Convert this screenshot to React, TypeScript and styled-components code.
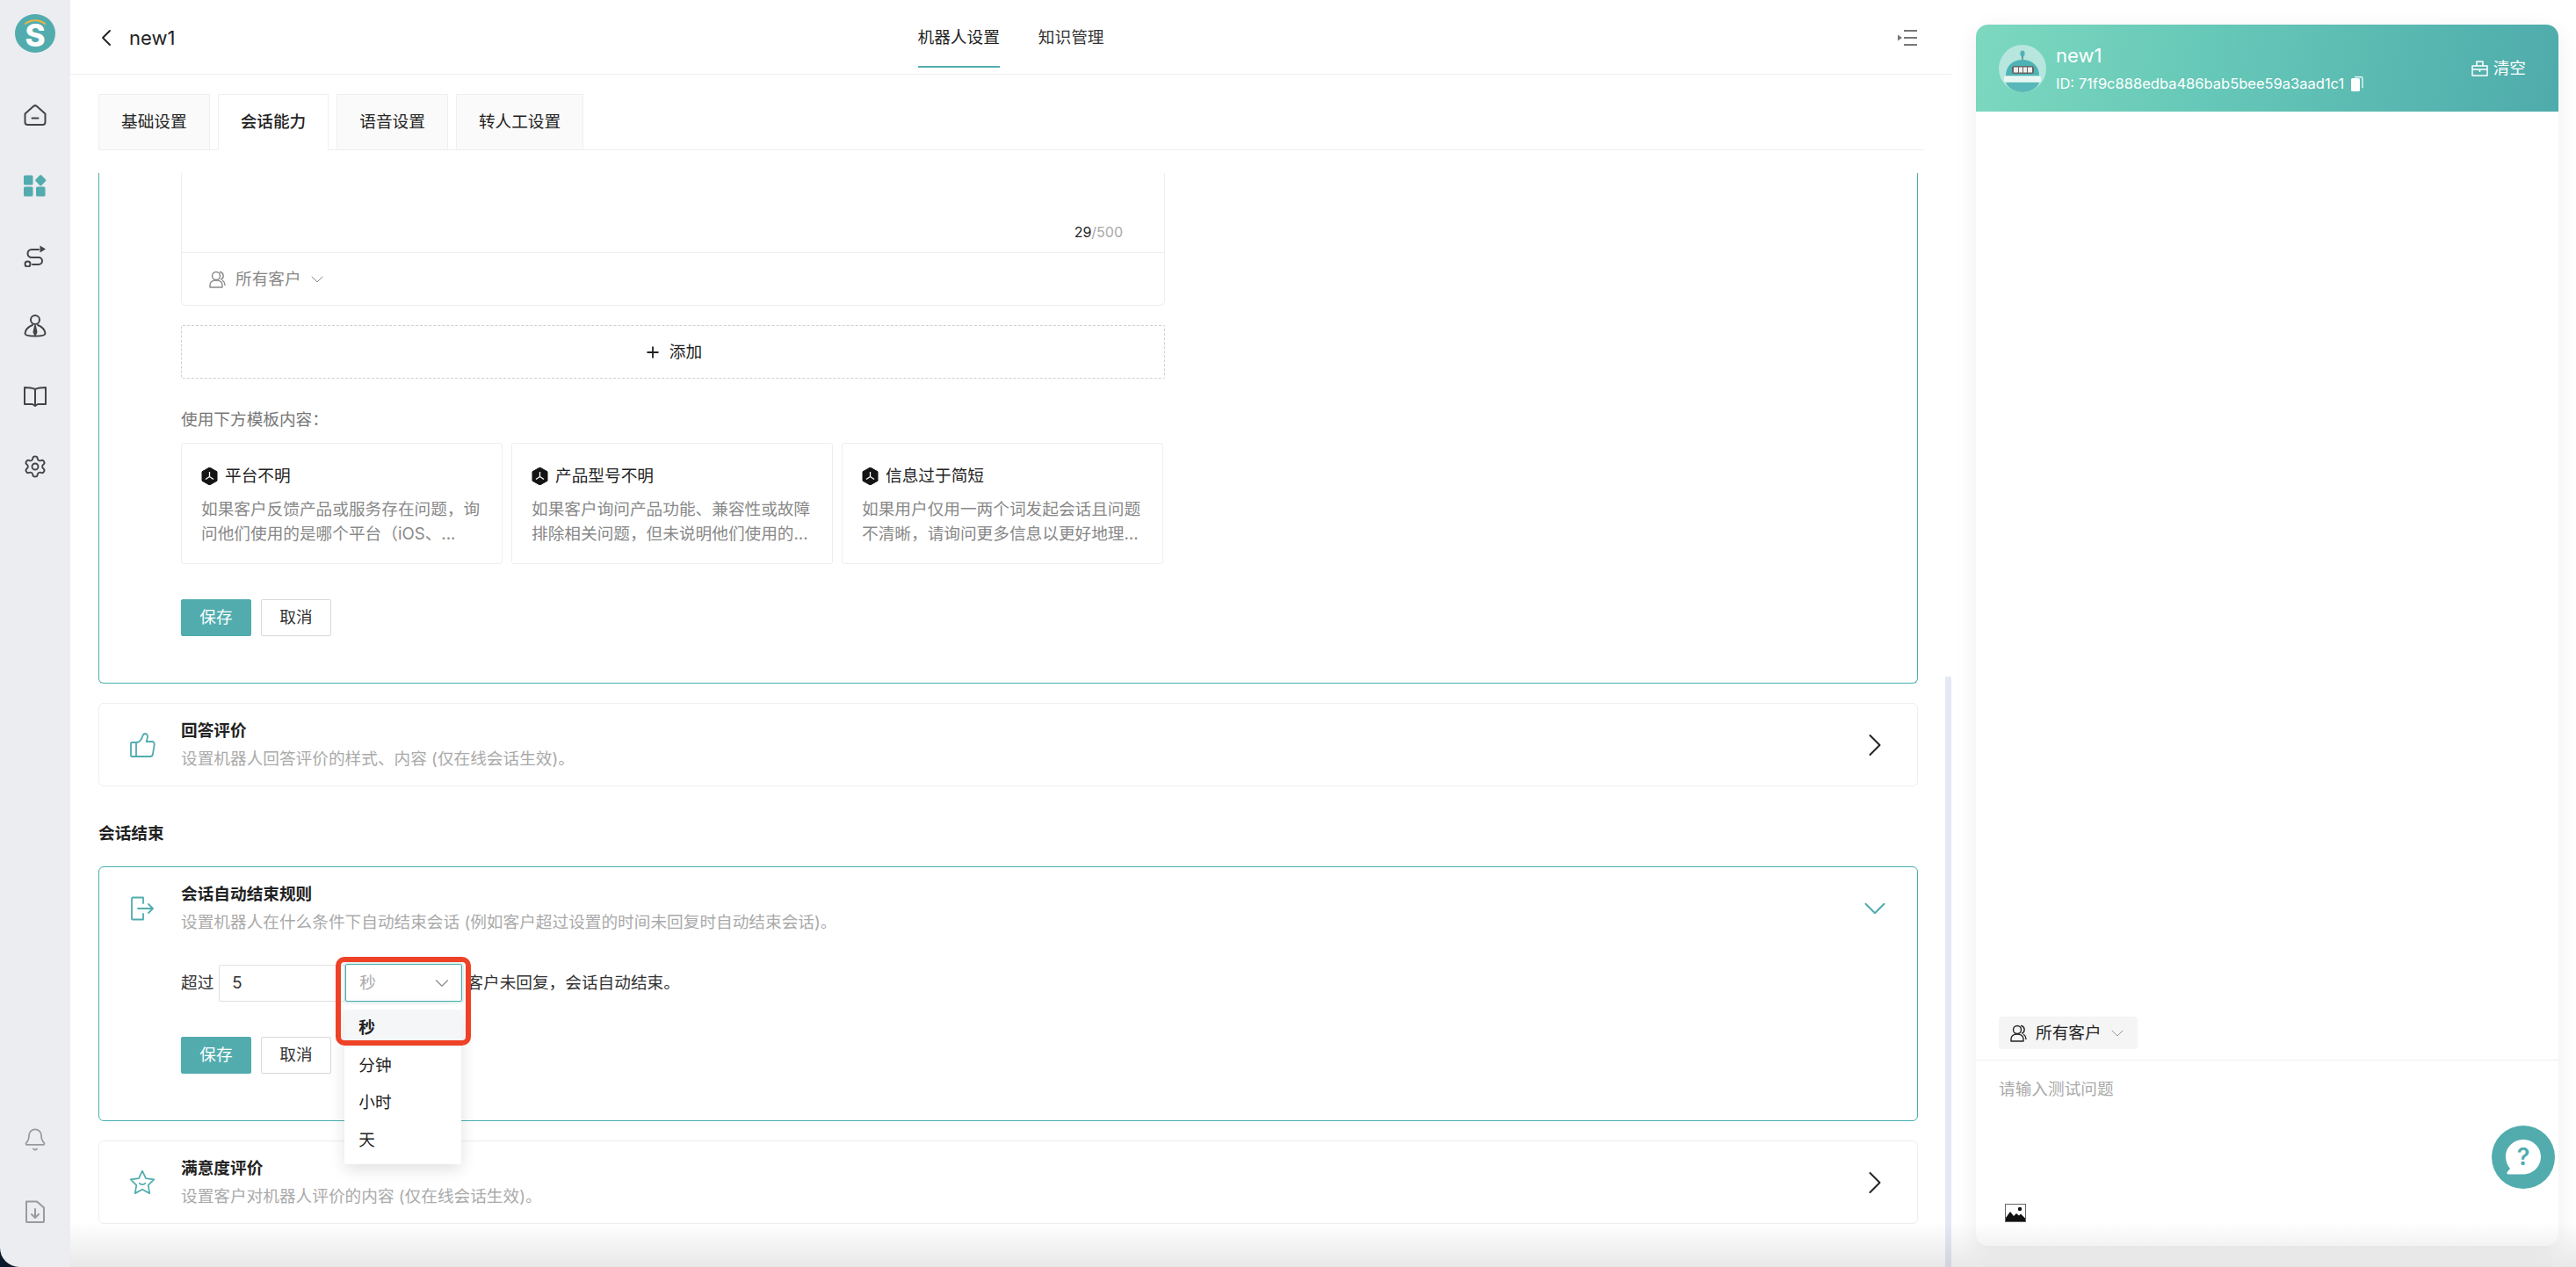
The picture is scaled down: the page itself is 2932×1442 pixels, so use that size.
import React from "react";
import styled, { createGlobalStyle } from "styled-components";
import { Bell, ChevronDown, ChevronLeft, ChevronRight, Plus, Settings } from "lucide-react";

const TEAL = "#52acae";
const FONT = `"Inter", "Noto Sans CJK SC", "Noto Sans", sans-serif`;

const GlobalStyle = createGlobalStyle`
  html, body {
    margin: 0;
    padding: 0;
    width: 2932px;
    height: 1442px;
    overflow: hidden;
    background: #0b1a2a;
  }
  * { box-sizing: border-box; }
`;

const Page = styled.div`
  position: relative;
  display: flex;
  width: 2932px;
  height: 1442px;
  overflow: hidden;
  font-family: ${FONT};
  font-size: 18.67px;
  line-height: 28px;
  color: #222;
  background: #0b1a2a;
`;

const Sidebar = styled.nav`
  width: 80px;
  flex: none;
  display: flex;
  flex-direction: column;
  align-items: center;
  padding: 16px 0 50px;
  background: #ebedf1;
  border-bottom-left-radius: 22px;
`;

const Logo = styled.div`
  width: 46px;
  height: 44px;
  margin-bottom: 31px;
`;

const NavItem = styled.div`
  width: 80px;
  height: 80px;
  display: flex;
  align-items: center;
  justify-content: center;
  color: ${p => (p.$active ? TEAL : "#444")};
`;

const SideBottom = styled.div`
  margin-top: auto;
  display: flex;
  flex-direction: column;
  align-items: center;
  gap: 55px;
  color: #9a9a9a;
`;

const Main = styled.main`
  position: relative;
  width: 2141px;
  flex: none;
  display: flex;
  flex-direction: column;
  background: #fff;
`;

const TopBar = styled.header`
  height: 85px;
  flex: none;
  display: grid;
  grid-template-columns: 1fr auto 1fr;
  align-items: center;
  padding: 0 39px;
  border-bottom: 1px solid #eeeeee;
`;

const BackGroup = styled.div`
  display: flex;
  align-items: center;
  gap: 10px;
  margin-left: -14px;
  font-size: 22px;
  color: #222;
`;

const TopNav = styled.div`
  display: flex;
  gap: 44px;
  height: 85px;
`;

const TopNavItem = styled.div`
  height: 77px;
  padding-top: 29px;
  color: ${p => (p.$active ? "#222" : "#333")};
  border-bottom: ${p => (p.$active ? `2px solid ${TEAL}` : "none")};
  white-space: nowrap;
`;

const CollapseBtn = styled.div`
  justify-self: end;
  display: flex;
  color: #777;
`;

const Body = styled.div`
  flex: 1;
  min-height: 0;
  display: flex;
  flex-direction: column;
  padding: 22px 31px 0 32px;
`;

const TabBar = styled.div`
  display: flex;
  gap: 9px;
  height: 64px;
  flex: none;
  border-bottom: 1px solid #eeeeee;
`;

const Tab = styled.div`
  height: 64px;
  padding: 17px 25px 0;
  border: 1px solid #efefef;
  border-bottom: ${p => (p.$active ? "1px solid #fff" : "1px solid #efefef")};
  background: ${p => (p.$active ? "#fff" : "#fafafa")};
  font-weight: ${p => (p.$active ? 500 : 400)};
  color: #222;
  white-space: nowrap;
`;

const Scroller = styled.div`
  margin-top: 26px;
  padding-right: 7px;
  flex: 1;
  min-height: 0;
  overflow: hidden;
`;

/* $clipped: the card that is scrolled past its top edge */
const OpenCard = styled.section`
  border: 1px solid #48b0ae;
  border-top: ${p => (p.$clipped ? "none" : "1px solid #48b0ae")};
  border-radius: ${p => (p.$clipped ? "0 0 6px 6px" : "6px")};
  background: #fff;
  padding: ${p => (p.$clipped ? "0 24px 53px 93px" : "17px 24px 53px 33px")};
  margin-top: ${p => (p.$clipped ? "0" : "23px")};
  height: ${p => (p.$clipped ? "581px" : "290px")};
`;

const TextBox = styled.div`
  width: 1120px;
  height: 151px;
  border: 1px solid #eeeeee;
  border-top: none;
  border-radius: 0 0 6px 6px;
  display: flex;
  flex-direction: column;
`;

const TextInput = styled.div`
  height: 91px;
  display: flex;
  justify-content: flex-end;
  align-items: flex-end;
  padding: 0 47px 12px 0;
  border-bottom: 1px solid #eeeeee;
  font-size: 16px;
  line-height: 22px;
  color: #a8a8a8;
  b {
    font-weight: 400;
    color: #222;
  }
`;

const AudienceRow = styled.div`
  flex: 1;
  display: flex;
  align-items: center;
  padding-left: 31px;
  gap: 6px;
  color: #888;
`;

const AudienceIcon = styled.span`
  display: flex;
  margin-right: ${p => (p.$dark ? "4px" : "5px")};
  color: ${p => (p.$dark ? "#222" : "#888")};
`;

const AddButton = styled.div`
  width: 1120px;
  height: 61px;
  margin-top: 22px;
  display: flex;
  align-items: center;
  justify-content: center;
  gap: 9px;
  border: 1px dashed #d0d0d0;
  border-radius: 2px;
  color: #222;
`;

const TemplateLabel = styled.div`
  margin-top: 33px;
  color: #777;
`;

const TemplateGrid = styled.div`
  margin-top: 12px;
  width: 1120px;
  display: grid;
  grid-template-columns: repeat(3, 366px);
  gap: 10px;
`;

const TemplateCard = styled.div`
  height: 138px;
  padding: 23px 10px 0 22px;
  border: 1px solid #eeeeee;
  border-radius: 3px;
`;

const TemplateTitle = styled.div`
  display: flex;
  align-items: center;
  gap: 8px;
  color: #222;
`;

const TemplateDesc = styled.div`
  margin-top: 10px;
  color: #888;
`;

const Actions = styled.div`
  margin: 40px 0 0 ${p => (p.$indent ? "60px" : "0")};
  display: flex;
  gap: 11px;
`;

const Btn = styled.div`
  width: 80px;
  height: 42px;
  display: flex;
  align-items: center;
  justify-content: center;
  border-radius: 2px;
  border: 1px solid ${p => (p.$primary ? TEAL : "#d9d9d9")};
  background: ${p => (p.$primary ? TEAL : "#fff")};
  color: ${p => (p.$primary ? "#fff" : "#333")};
`;

const RowCard = styled.section`
  height: 95px;
  margin-top: 22px;
  border: 1px solid #eeeeee;
  border-radius: 6px;
  padding-top: 17px;
`;

const RowHead = styled.div`
  display: grid;
  grid-template-columns: 32px 1fr 24px;
  column-gap: 28px;
  align-items: center;
  padding: ${p => (p.$flush ? "0 12px 0 0" : "0 36px 0 33px")};
`;

const RowIcon = styled.div`
  display: flex;
  justify-content: center;
  color: ${TEAL};
`;

const RowTitle = styled.div`
  font-weight: 700;
  color: #222;
`;

const RowDesc = styled.div`
  margin-top: 4px;
  color: #aaa;
`;

const RowArrow = styled.div`
  display: flex;
  justify-content: center;
  color: ${p => (p.$open ? TEAL : "#222")};
  svg {
    flex: none;
  }
`;

const SectionTitle = styled.h3`
  margin: 40px 0 0;
  font-size: 18.67px;
  line-height: 28px;
  font-weight: 700;
  color: #222;
`;

const FormRow = styled.div`
  margin: 33px 0 0 60px;
  display: flex;
  align-items: center;
  height: 43px;
  color: #333;
`;

const NumberInput = styled.div`
  width: 144px;
  height: 42px;
  margin-left: 6px;
  padding-left: 14px;
  line-height: 40px;
  border: 1px solid #dfdfdf;
  border-radius: 2px;
  color: #333;
`;

const SelectWrap = styled.div`
  position: relative;
  width: 133px;
  height: 43px;
  margin-right: 5px;
`;

const SelectBox = styled.div`
  height: 43px;
  display: flex;
  align-items: center;
  justify-content: space-between;
  padding: 0 9px 0 15px;
  border: 1px solid #48b0ae;
  border-radius: 2px;
  box-shadow: 0 0 0 2px rgba(82, 172, 174, 0.15);
  background: #fff;
  color: #aaa;
`;

const Dropdown = styled.div`
  position: absolute;
  top: 47px;
  left: -1px;
  width: 133px;
  height: 181px;
  padding: 5px 0;
  background: #fff;
  border-radius: 3px;
  box-shadow: 0 6px 18px rgba(0, 0, 0, 0.12);
  z-index: 5;
`;

const Option = styled.div`
  height: 42.67px;
  line-height: 42.67px;
  padding-left: 16px;
  color: #222;
  font-weight: ${p => (p.$selected ? 700 : 400)};
  background: ${p => (p.$selected ? "#f5f6f8" : "#fff")};
`;

/* annotation box the screenshot has on top of the select */
const Highlight = styled.div`
  position: absolute;
  top: -8px;
  left: -11px;
  width: 154px;
  height: 101px;
  border: 6px solid #ee4227;
  border-radius: 10px;
  z-index: 6;
  pointer-events: none;
`;

const Thumb = styled.div`
  position: absolute;
  right: 0;
  top: 770px;
  bottom: 0;
  width: 7px;
  background: #e5e9f5;
`;

const SidePanel = styled.aside`
  flex: 1;
  min-width: 0;
  padding: 28px 20px 24px 28px;
  background: #fff;
`;

const ChatCard = styled.div`
  height: 100%;
  display: flex;
  flex-direction: column;
  background: #fff;
  border-radius: 14px;
  box-shadow: 0 6px 26px rgba(0, 0, 0, 0.07);
`;

const ChatHead = styled.div`
  height: 99px;
  flex: none;
  display: flex;
  align-items: center;
  padding: 0 37px 0 26px;
  gap: 11px;
  color: #fff;
  border-radius: 14px 14px 0 0;
  background: linear-gradient(100deg, #7dd8bf 0%, #66c8b8 40%, #4eabab 100%);
`;

const AvatarBox = styled.div`
  width: 54px;
  height: 54px;
  flex: none;
`;

const ChatInfo = styled.div`
  padding-top: 3px;
`;

const ChatName = styled.div`
  font-size: 22px;
  line-height: 28px;
`;

const ChatId = styled.div`
  margin-top: 4px;
  display: flex;
  align-items: center;
  gap: 8px;
  font-size: 16.5px;
  line-height: 28px;
  white-space: nowrap;
`;

const ClearBtn = styled.div`
  margin-left: auto;
  display: flex;
  align-items: center;
  gap: 6px;
`;

const ChatBody = styled.div`
  flex: 1;
`;

const AudiencePill = styled.div`
  align-self: flex-start;
  margin: 0 0 12px 26px;
  width: 158px;
  height: 37px;
  display: flex;
  align-items: center;
  gap: 6px;
  padding-left: 13px;
  background: #f5f5f5;
  border-radius: 4px;
  color: #222;
`;

const Composer = styled.div`
  height: 212px;
  flex: none;
  display: flex;
  flex-direction: column;
  justify-content: space-between;
  padding: 19px 0 27px 26px;
  border-top: 1px solid #eeeeee;
  color: #aaa;
`;

const ImageBtn = styled.div`
  display: flex;
  padding-left: 7px;
`;

const HelpButton = styled.div`
  position: absolute;
  right: 24px;
  bottom: 89px;
  width: 72px;
  height: 72px;
  display: flex;
  align-items: center;
  justify-content: center;
  border-radius: 50%;
  background: ${TEAL};
`;

const BottomFade = styled.div`
  position: absolute;
  left: 80px;
  right: 0;
  bottom: 0;
  height: 52px;
  pointer-events: none;
  z-index: 8;
  background: linear-gradient(180deg, rgba(0, 0, 0, 0), rgba(0, 0, 0, 0.09));
`;

const LogoMark = () => (
  <svg width="46" height="44" viewBox="0 0 46 44">
    <ellipse cx="23" cy="22" rx="23" ry="22" fill={TEAL} />
    <path d="M12 11c6-5 16-5 22 0" fill="none" stroke="#eab543" strokeWidth="2" strokeLinecap="round" />
    <text x="23" y="37" textAnchor="middle" fontFamily="Inter, sans-serif" fontWeight="800" fontSize="35" fill="#fff">S</text>
  </svg>
);

const Icon = ({ w = 26, h = 26, vb, children, ...rest }: any) => (
  <svg width={w} height={h} viewBox={vb || `0 0 ${w} ${h}`} fill="none" stroke="currentColor" strokeWidth="2" strokeLinecap="round" strokeLinejoin="round" {...rest}>
    {children}
  </svg>
);

const HomeIcon = () => (
  <Icon>
    <path d="M1.500 11.500 11 3a3 3 0 0 1 4 0l9.500 8.500V21a3 3 0 0 1-3 3h-17a3 3 0 0 1-3-3Z" />
    <path d="M9.500 16.500h7" />
  </Icon>
);

const AppsIcon = () => (
  <svg width="26" height="26" viewBox="0 0 26 26" fill="currentColor">
    <rect x="0" y="1.500" width="10.500" height="11" rx="1.500" />
    <rect x="0" y="14.500" width="10.500" height="11" rx="1.500" />
    <rect x="14" y="14.500" width="10.500" height="11" rx="1.500" />
    <rect x="14.500" y="2.500" width="9.500" height="9.500" rx="1.500" transform="rotate(45 19.250 7.250)" />
  </svg>
);

const RouteIcon = () => (
  <Icon>
    <path d="M17 6H9a4.500 4.500 0 0 0 0 9h8a4 4 0 0 1 0 8h-7" />
    <circle cx="4.500" cy="22.500" r="3" />
    <path d="M18.500 1.500 25 5.500l-6.500 4Z" fill="currentColor" stroke="none" />
  </Icon>
);

const AgentIcon = () => (
  <Icon>
    <circle cx="13" cy="6" r="5" />
    <path d="M10 12C5 13.500 1.500 18 1.500 21.500c0 2 4 3 11.500 3s11.500-1 11.500-3C24.500 18 21 13.500 16 12" />
    <path d="m13 13-1.500 7 1.500 3 1.500-3Z" fill="currentColor" />
  </Icon>
);

const BookIcon = () => (
  <Icon>
    <path d="M13 5C10 3.500 5 3 1 3v19h9l3 2 3-2h9V3c-4 0-9 .5-12 2Zm0 0v18" />
  </Icon>
);

const FileDownIcon = () => (
  <Icon>
    <path d="M3 1.500h12l8 7V24a1 1 0 0 1-1 1H4a1 1 0 0 1-1-1Z" />
    <path d="M13 10v10m-4-4 4 4 4-4" />
  </Icon>
);

const CollapseIcon = () => (
  <svg width="22" height="18" viewBox="0 0 22 18" fill="currentColor">
    <path d="M0 5.500 5 9l-5 3.500Z" />
    <rect x="7" y="0" width="15" height="2" />
    <rect x="7" y="8" width="15" height="2" />
    <rect x="7" y="16" width="15" height="2" />
  </svg>
);

const PeopleIcon = () => (
  <svg width="19" height="20" viewBox="0 0 19 20" fill="none" stroke="currentColor" strokeWidth="1.400" strokeLinecap="round" strokeLinejoin="round">
    <circle cx="8" cy="6" r="4.500" />
    <path d="M1 19v-2.500c0-3 2.500-5.500 7-5.500s7 2.500 7 5.500V19Z" />
    <path d="M12.500 1.500a4.500 4.500 0 0 1 1 8.500m2 1.500c1.500 1 2.500 2.800 2.500 5" />
  </svg>
);

const HexIcon = () => (
  <svg width="19" height="20" viewBox="0 0 19 20">
    <path d="M9.500 0 18 4.800v10.400L9.500 20 1 15.200V4.800Z" fill="#141414" stroke="#141414" strokeLinejoin="round" />
    <path d="M9.500 5v5.500L5 13.500m4.500-3 4.500 3" fill="none" stroke="#fff" strokeWidth="1.300" />
  </svg>
);

const ThumbIcon = () => (
  <svg width="30" height="30" viewBox="0 0 30 30" fill="none" stroke="currentColor" strokeWidth="1.800" strokeLinecap="round" strokeLinejoin="round">
    <path d="M8 28H3a1 1 0 0 1-1-1V13a1 1 0 0 1 1-1h5Z" />
    <path d="M8 12c3 0 5-2 6.500-5 .8-2 1-5 3.500-5 3 0 3.500 3 2.500 6l-1 3h6.500c2 0 3 1.500 2.700 3.500l-1.800 11c-.3 1.800-1.500 2.500-3 2.500H8" />
  </svg>
);

const ExitIcon = () => (
  <svg width="28" height="28" viewBox="0 0 28 28" fill="none" stroke="currentColor" strokeWidth="1.800" strokeLinecap="round" strokeLinejoin="round">
    <path d="M15 8V1.500H3a1 1 0 0 0-1 1v23a1 1 0 0 0 1 1h12V20" />
    <path d="M9 14h17m-5-5 5 5-5 5" />
  </svg>
);

const StarIcon = () => (
  <svg width="34" height="34" viewBox="0 0 24 24" fill="none" stroke="currentColor" strokeWidth="1.300" strokeLinecap="round" strokeLinejoin="round">
    <path d="m12 2 3 6.300 7 1-5 4.900 1.200 6.900-6.200-3.300-6.200 3.300L7 14.200l-5-4.900 7-1Z" />
    <path d="M9.500 12.500c.8 1.500 4.200 1.500 5 0" />
  </svg>
);

const RobotAvatar = () => (
  <svg width="54" height="54" viewBox="0 0 54 54">
    <defs>
      <clipPath id="avatarClip"><circle cx="27" cy="27" r="27" /></clipPath>
    </defs>
    <g clipPath="url(#avatarClip)">
      <rect width="54" height="54" fill="#b7e6df" />
      <ellipse cx="27" cy="10" rx="2.600" ry="3.500" fill="#4fb3b6" />
      <rect x="26.400" y="13" width="1.200" height="4" fill="#45686a" />
      <path d="M8 35c0-11 8-18 19-18s19 7 19 18Z" fill="#4fb3b6" />
      <rect x="15" y="24" width="25" height="9" rx="2.500" fill="#666" />
      <rect x="17" y="25.500" width="5" height="6" fill="#eee" />
      <rect x="23" y="25.500" width="4" height="6" fill="#eee" />
      <rect x="28" y="25.500" width="4" height="6" fill="#eee" />
      <rect x="33" y="25.500" width="5" height="6" fill="#eee" />
      <rect x="6" y="36" width="42" height="6" fill="#e8f6f3" />
      <path d="M8 43h38c-2 6-10 11-19 11S10 49 8 43Z" fill="#58b7b8" />
    </g>
  </svg>
);

const CopyIcon = () => (
  <svg width="14" height="17" viewBox="0 0 14 17">
    <rect x="0" y="2" width="10" height="15" rx="1.500" fill="#fff" />
    <path d="M4 .7h7.500a1.500 1.500 0 0 1 1.500 1.500v11" fill="none" stroke="#fff" strokeWidth="1.200" />
  </svg>
);

const BrushIcon = () => (
  <svg width="19" height="18" viewBox="0 0 19 18" fill="none" stroke="#fff" strokeWidth="1.500" strokeLinejoin="round">
    <path d="M6 6V1h7v5" />
    <path d="M1 6h17v11H1Z" />
    <path d="M1 10h17M9.500 10v3" />
  </svg>
);

const ImageIcon = () => (
  <svg width="24" height="21" viewBox="0 0 24 21">
    <rect x="0.500" y="0.500" width="23" height="20" fill="#fff" stroke="#666" />
    <path d="M1 19v-3l5-7 4 5 3-3 3 2.500 2-2 5 5V19Z" fill="#111" />
    <path d="M1 20h22v-3H1Z" fill="#111" />
    <circle cx="17" cy="6" r="2.200" fill="#111" />
  </svg>
);

const HelpBubble = () => (
  <svg width="40" height="40" viewBox="0 0 40 40">
    <path d="M20 0c11 0 20 8.500 20 19.500S31 39.500 20 39.500H3c-1.500 0-2.200-1.500-1.300-2.600L5 33C2 29.500 0 25 0 19.500 0 8.500 9 0 20 0Z" fill="#fff" />
    <text x="20" y="29" textAnchor="middle" fontFamily="Inter, sans-serif" fontSize="27" fontWeight="600" fill={TEAL}>?</text>
  </svg>
);

const templates = [
  { title: "平台不明", desc: "如果客户反馈产品或服务存在问题，询问他们使用的是哪个平台（iOS、..." },
  { title: "产品型号不明", desc: "如果客户询问产品功能、兼容性或故障排除相关问题，但未说明他们使用的..." },
  { title: "信息过于简短", desc: "如果用户仅用一两个词发起会话且问题不清晰，请询问更多信息以更好地理..." },
];

const App = () => (
  <Page>
    <GlobalStyle />
    <Sidebar>
      <Logo><LogoMark /></Logo>
      <NavItem><HomeIcon /></NavItem>
      <NavItem $active><AppsIcon /></NavItem>
      <NavItem><RouteIcon /></NavItem>
      <NavItem><AgentIcon /></NavItem>
      <NavItem><BookIcon /></NavItem>
      <NavItem><Settings size={28} strokeWidth={1.6} /></NavItem>
      <SideBottom>
        <Bell size={28} strokeWidth={1.5} />
        <FileDownIcon />
      </SideBottom>
    </Sidebar>

    <Main>
      <TopBar>
        <BackGroup>
          <ChevronLeft size={32} strokeWidth={1.4} />
          new1
        </BackGroup>
        <TopNav>
          <TopNavItem $active>机器人设置</TopNavItem>
          <TopNavItem>知识管理</TopNavItem>
        </TopNav>
        <CollapseBtn><CollapseIcon /></CollapseBtn>
      </TopBar>

      <Body>
        <TabBar>
          <Tab>基础设置</Tab>
          <Tab $active>会话能力</Tab>
          <Tab>语音设置</Tab>
          <Tab>转人工设置</Tab>
        </TabBar>

        <Scroller>
          <OpenCard $clipped>
            <TextBox>
              <TextInput><span><b>29</b>/500</span></TextInput>
              <AudienceRow>
                <AudienceIcon><PeopleIcon /></AudienceIcon>
                所有客户
                <ChevronDown size={24} strokeWidth={1} />
              </AudienceRow>
            </TextBox>
            <AddButton><Plus size={20} strokeWidth={2.2} />添加</AddButton>
            <TemplateLabel>使用下方模板内容：</TemplateLabel>
            <TemplateGrid>
              {templates.map(t => (
                <TemplateCard key={t.title}>
                  <TemplateTitle><HexIcon />{t.title}</TemplateTitle>
                  <TemplateDesc>{t.desc}</TemplateDesc>
                </TemplateCard>
              ))}
            </TemplateGrid>
            <Actions>
              <Btn $primary>保存</Btn>
              <Btn>取消</Btn>
            </Actions>
          </OpenCard>

          <RowCard>
            <RowHead>
              <RowIcon><ThumbIcon /></RowIcon>
              <div>
                <RowTitle>回答评价</RowTitle>
                <RowDesc>设置机器人回答评价的样式、内容 (仅在线会话生效)。</RowDesc>
              </div>
              <RowArrow><ChevronRight size={44} strokeWidth={1.1} /></RowArrow>
            </RowHead>
          </RowCard>

          <SectionTitle>会话结束</SectionTitle>

          <OpenCard>
            <RowHead $flush>
              <RowIcon><ExitIcon /></RowIcon>
              <div>
                <RowTitle>会话自动结束规则</RowTitle>
                <RowDesc>设置机器人在什么条件下自动结束会话 (例如客户超过设置的时间未回复时自动结束会话)。</RowDesc>
              </div>
              <RowArrow $open><ChevronDown size={42} strokeWidth={1.2} /></RowArrow>
            </RowHead>
            <FormRow>
              超过
              <NumberInput>5</NumberInput>
              <SelectWrap>
                <SelectBox>秒<ChevronDown size={26} strokeWidth={1} color="#888" /></SelectBox>
                <Dropdown>
                  <Option $selected>秒</Option>
                  <Option>分钟</Option>
                  <Option>小时</Option>
                  <Option>天</Option>
                </Dropdown>
                <Highlight />
              </SelectWrap>
              客户未回复，会话自动结束。
            </FormRow>
            <Actions $indent>
              <Btn $primary>保存</Btn>
              <Btn>取消</Btn>
            </Actions>
          </OpenCard>

          <RowCard>
            <RowHead>
              <RowIcon><StarIcon /></RowIcon>
              <div>
                <RowTitle>满意度评价</RowTitle>
                <RowDesc>设置客户对机器人评价的内容 (仅在线会话生效)。</RowDesc>
              </div>
              <RowArrow><ChevronRight size={44} strokeWidth={1.1} /></RowArrow>
            </RowHead>
          </RowCard>
        </Scroller>
      </Body>
      <Thumb />
    </Main>

    <SidePanel>
      <ChatCard>
        <ChatHead>
          <AvatarBox><RobotAvatar /></AvatarBox>
          <ChatInfo>
            <ChatName>new1</ChatName>
            <ChatId>ID: 71f9c888edba486bab5bee59a3aad1c1 <CopyIcon /></ChatId>
          </ChatInfo>
          <ClearBtn><BrushIcon />清空</ClearBtn>
        </ChatHead>
        <ChatBody />
        <AudiencePill>
          <AudienceIcon $dark><PeopleIcon /></AudienceIcon>
          所有客户
          <ChevronDown size={24} strokeWidth={1} color="#999" />
        </AudiencePill>
        <Composer>
          请输入测试问题
          <ImageBtn><ImageIcon /></ImageBtn>
        </Composer>
      </ChatCard>
    </SidePanel>

    <HelpButton><HelpBubble /></HelpButton>
    <BottomFade />
  </Page>
);

export default App;
